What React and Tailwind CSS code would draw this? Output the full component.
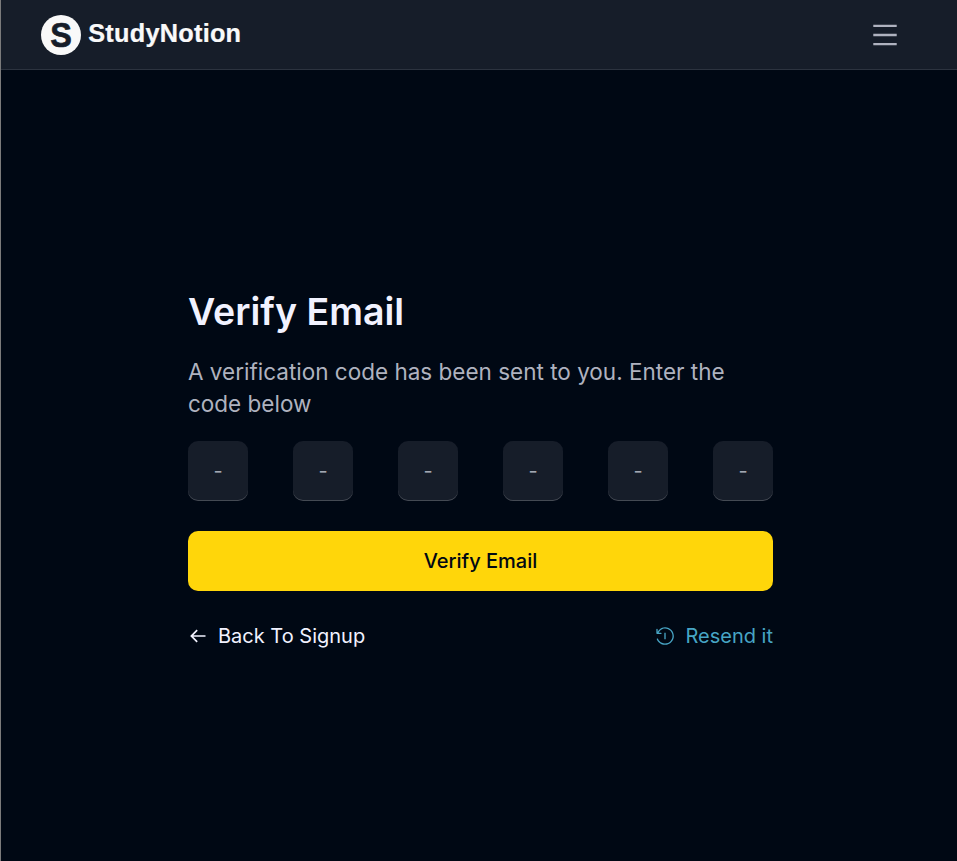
import { AiOutlineMenu } from "react-icons/ai";
import { BiArrowBack } from "react-icons/bi";
import { RxCountdownTimer } from "react-icons/rx";

function Logo() {
  return (
    <svg width="202" height="40" viewBox="0 0 202 40" role="img" className="shrink-0 font-['Liberation_Sans',sans-serif] font-bold">
      <circle cx="20" cy="20" r="20" fill="#f9f9f9" />
      <text x="9.3" y="32.2" fontSize="34.5" fill="#161d29" stroke="#161d29" strokeWidth="0.7" textLength="21.6" lengthAdjust="spacingAndGlyphs">S</text>
      <g transform="translate(47.2 27.2) scale(0.98 1)">
        <text fontSize="25.8" fill="#f9f9f9" stroke="#f9f9f9" strokeWidth="0.25" textLength="156" lengthAdjust="spacing">StudyNotion</text>
      </g>
    </svg>
  );
}

function CodeInput({ index }) {
  return (
    <input
      aria-label={`Digit ${index + 1}`}
      placeholder="-"
      className="h-[60px] w-[60px] rounded-[10px] bg-[#161d29] text-center text-xl leading-[30px] text-[#f1f2ff] shadow-[inset_0_-1px_0_rgba(255,255,255,0.2)] outline-none placeholder:text-[#a3a8b3]"
    />
  );
}

export default function App() {
  return (
    <div className="flex min-h-[861px] flex-col border-l border-[#7b7b7b] bg-[#000814] font-['Inter',sans-serif] text-[#f1f2ff]">
      <header className="flex h-[70px] items-center justify-between border-b border-[#2c333f] bg-[#161d29] pr-[57px] pl-10">
        <Logo />
        <button aria-label="Menu">
          <AiOutlineMenu size={30} color="#afb2bf" />
        </button>
      </header>
      <main className="ml-[187px] w-[585px] pt-[218px]">
        <h1 className="text-[37.5px] leading-[47.5px] font-semibold">Verify Email</h1>
        <p className="my-5 text-[22.5px] leading-[32.5px] text-[#afb2bf]">
          A verification code has been sent to you. Enter the code below
        </p>
        <div className="flex justify-between">
          {[0, 1, 2, 3, 4, 5].map((i) => (
            <CodeInput key={i} index={i} />
          ))}
        </div>
        <button className="mt-[30px] h-[60px] w-full rounded-[10px] bg-[#ffd60a] text-xl leading-[30px] font-medium text-[#000814]">
          Verify Email
        </button>
        <div className="mt-[30px] flex items-center justify-between text-xl leading-[30px]">
          <button className="flex items-center gap-x-2.5">
            <BiArrowBack />
            Back To Signup
          </button>
          <button className="flex items-center gap-x-2.5 text-[#47a5c5]">
            <RxCountdownTimer />
            Resend it
          </button>
        </div>
      </main>
    </div>
  );
}
